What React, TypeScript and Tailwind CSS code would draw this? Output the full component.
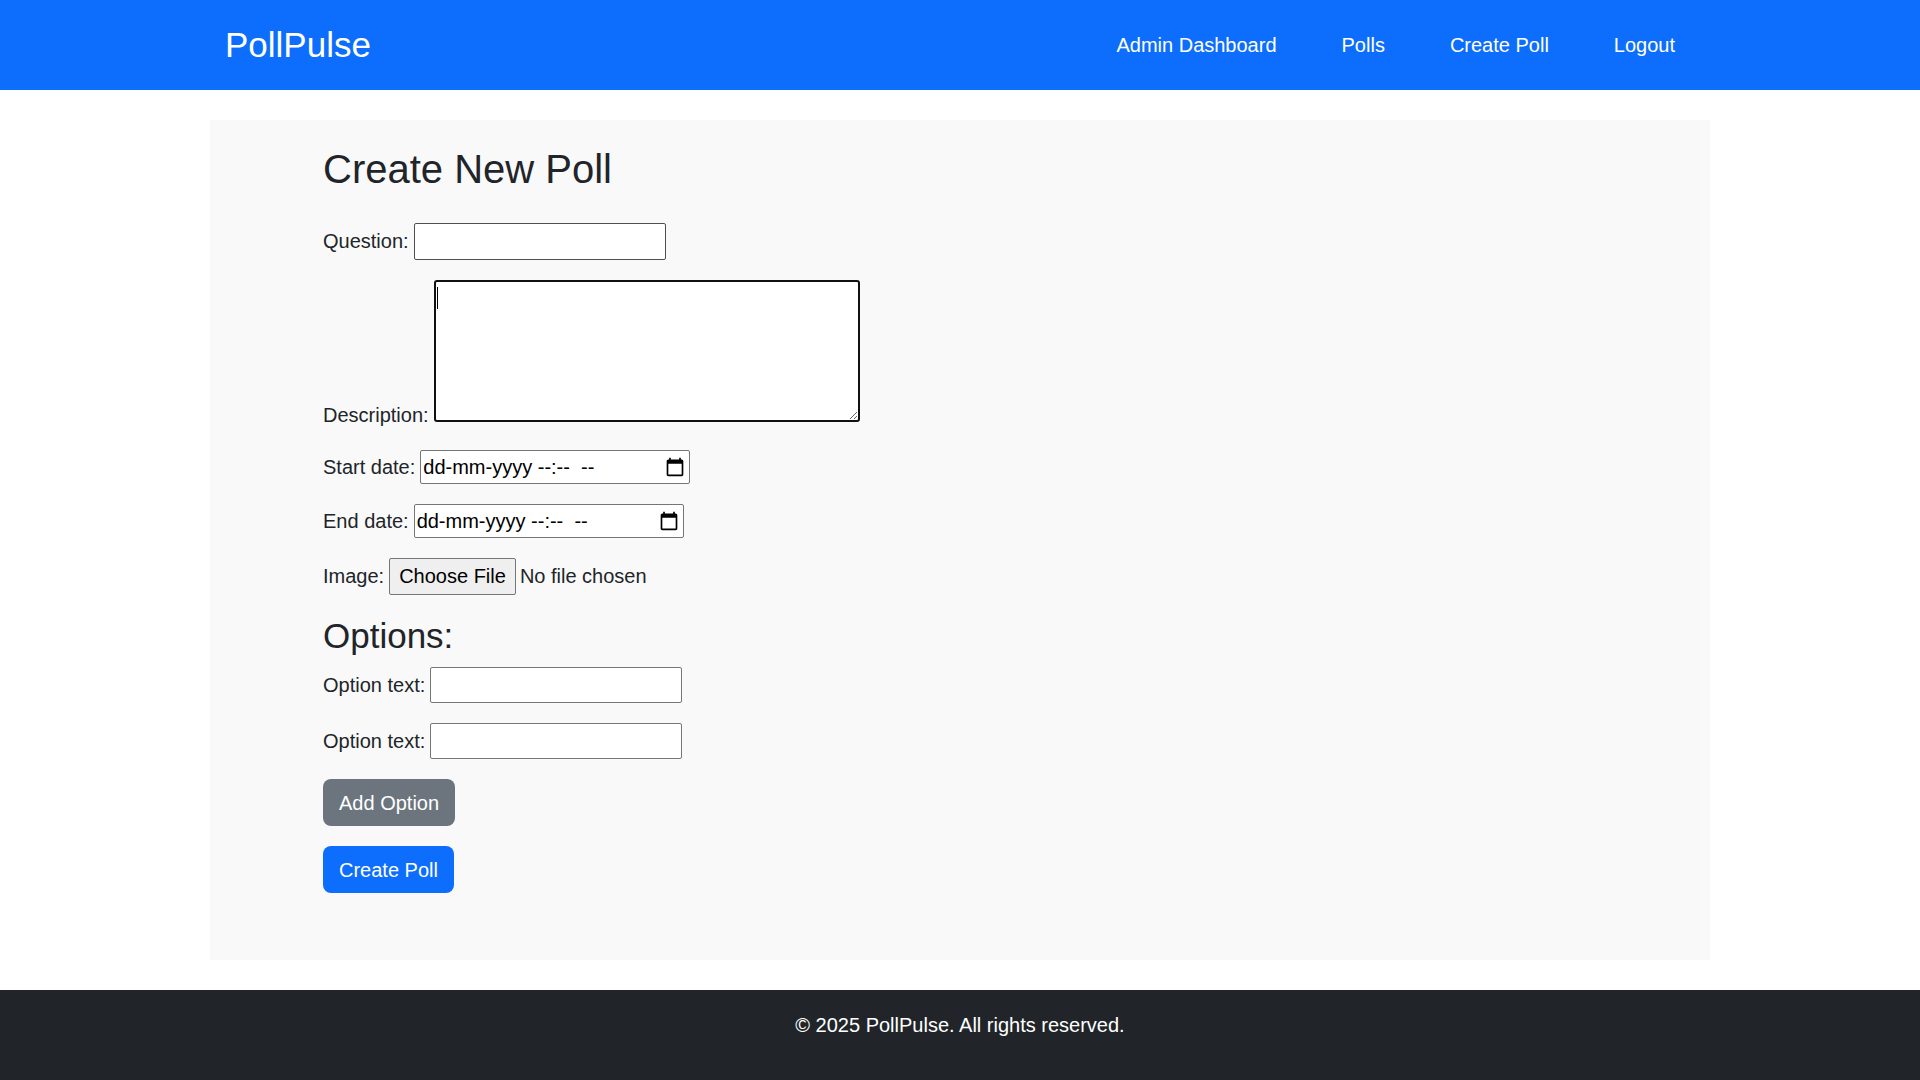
import { ReactNode } from "react";

const FIELD = "border border-[#767676] bg-white rounded-[2px] text-black";

function Row({ id, label, children, tall }: { id: string; label: string; children: ReactNode; tall?: boolean }) {
  return (
    <div className={tall ? "flex items-end gap-[5px] pb-2" : "flex items-baseline gap-[5px]"}>
      <label htmlFor={id} className={tall ? "-mb-2" : ""}>
        {label}
      </label>
      {children}
    </div>
  );
}

function CalendarIcon() {
  return (
    <svg width="20" height="20" viewBox="0 0 24 24" fill="currentColor" aria-hidden="true">
      <path d="M20 3h-1V1h-2v2H7V1H5v2H4c-1.1 0-2 .9-2 2v16c0 1.1.9 2 2 2h16c1.1 0 2-.9 2-2V5c0-1.1-.9-2-2-2zm0 18H4V8h16v13z" />
    </svg>
  );
}

function DateField({ id }: { id: string }) {
  return (
    <div className={`${FIELD} flex h-[34px] w-[270px] items-center pl-[2px] pr-1`}>
      <input
        id={id}
        type="text"
        placeholder="dd-mm-yyyy --:--  --"
        className="min-w-0 flex-1 outline-none placeholder:text-black"
      />
      <button type="button" aria-label="Open calendar">
        <CalendarIcon />
      </button>
    </div>
  );
}

const LINKS = ["Admin Dashboard", "Polls", "Create Poll", "Logout"];

export default function App() {
  return (
    <div className="flex min-h-screen flex-col bg-white font-['Liberation_Sans',Arial,sans-serif] text-[20px] leading-[30px] text-[#212529]">
      <header className="bg-[#0d6efd] py-5 text-white">
        <div className="mx-auto flex min-h-[50px] max-w-[1500px] items-center justify-between px-[15px]">
          <a href="#" className="text-[35px] leading-[42px]">
            PollPulse
          </a>
          <nav className="flex gap-[25px]">
            {LINKS.map((l) => (
              <a key={l} href="#" className="px-5">
                {l}
              </a>
            ))}
          </nav>
        </div>
      </header>

      <main className="mx-auto my-[30px] w-full max-w-[1500px] flex-1 bg-[#f9f9f9] px-[113px] py-[25px]">
        <h1 className="mb-[30px] text-[40px] leading-[48px]">Create New Poll</h1>
        <form className="flex flex-col items-start gap-5" onSubmit={(e) => e.preventDefault()}>
          <Row id="question" label="Question:">
            <input
              id="question"
              type="text"
              className="h-[37px] w-[252px] rounded-[2px] border border-[#4f4f4f] bg-white px-[3px] text-black"
            />
          </Row>
          <Row id="description" label="Description:" tall>
            <div className="relative flex">
              <textarea
                id="description"
                className="h-[142px] w-[426px] resize rounded-[3px] border-2 border-[#101010] bg-white px-[2px] py-1 text-black caret-transparent outline-none"
              />
              <span aria-hidden="true" className="pointer-events-none absolute top-[7px] left-[3px] h-[22px] w-px bg-black" />
            </div>
          </Row>
          <Row id="start" label="Start date:">
            <DateField id="start" />
          </Row>
          <Row id="end" label="End date:">
            <DateField id="end" />
          </Row>
          <Row id="image" label="Image:">
            <input
              id="image"
              type="file"
              className="h-[37px] file:mr-1 file:h-[37px] file:rounded-[2px] file:border file:border-solid file:border-[#767676] file:bg-[#efefef] file:px-[9px] file:pb-[2px] file:text-black"
            />
          </Row>
          <section className="flex flex-col gap-5">
            <h2 className="-mb-[10px] text-[35px] leading-[42px]">Options:</h2>
            <Row id="option-1" label="Option text:">
              <input id="option-1" type="text" className={`${FIELD} h-[36px] w-[252px] px-[3px]`} />
            </Row>
            <Row id="option-2" label="Option text:">
              <input id="option-2" type="text" className={`${FIELD} h-[36px] w-[252px] px-[3px]`} />
            </Row>
          </section>
          <button type="button" className="h-[47px] rounded-lg bg-[#6c757d] px-4 text-white">
            Add Option
          </button>
          <button type="submit" className="h-[47px] rounded-lg bg-[#0d6efd] px-4 text-white">
            Create Poll
          </button>
        </form>
      </main>

      <footer className="bg-[#212529] pt-5 pb-10 text-center text-white">
        <p>© 2025 PollPulse. All rights reserved.</p>
      </footer>
    </div>
  );
}
